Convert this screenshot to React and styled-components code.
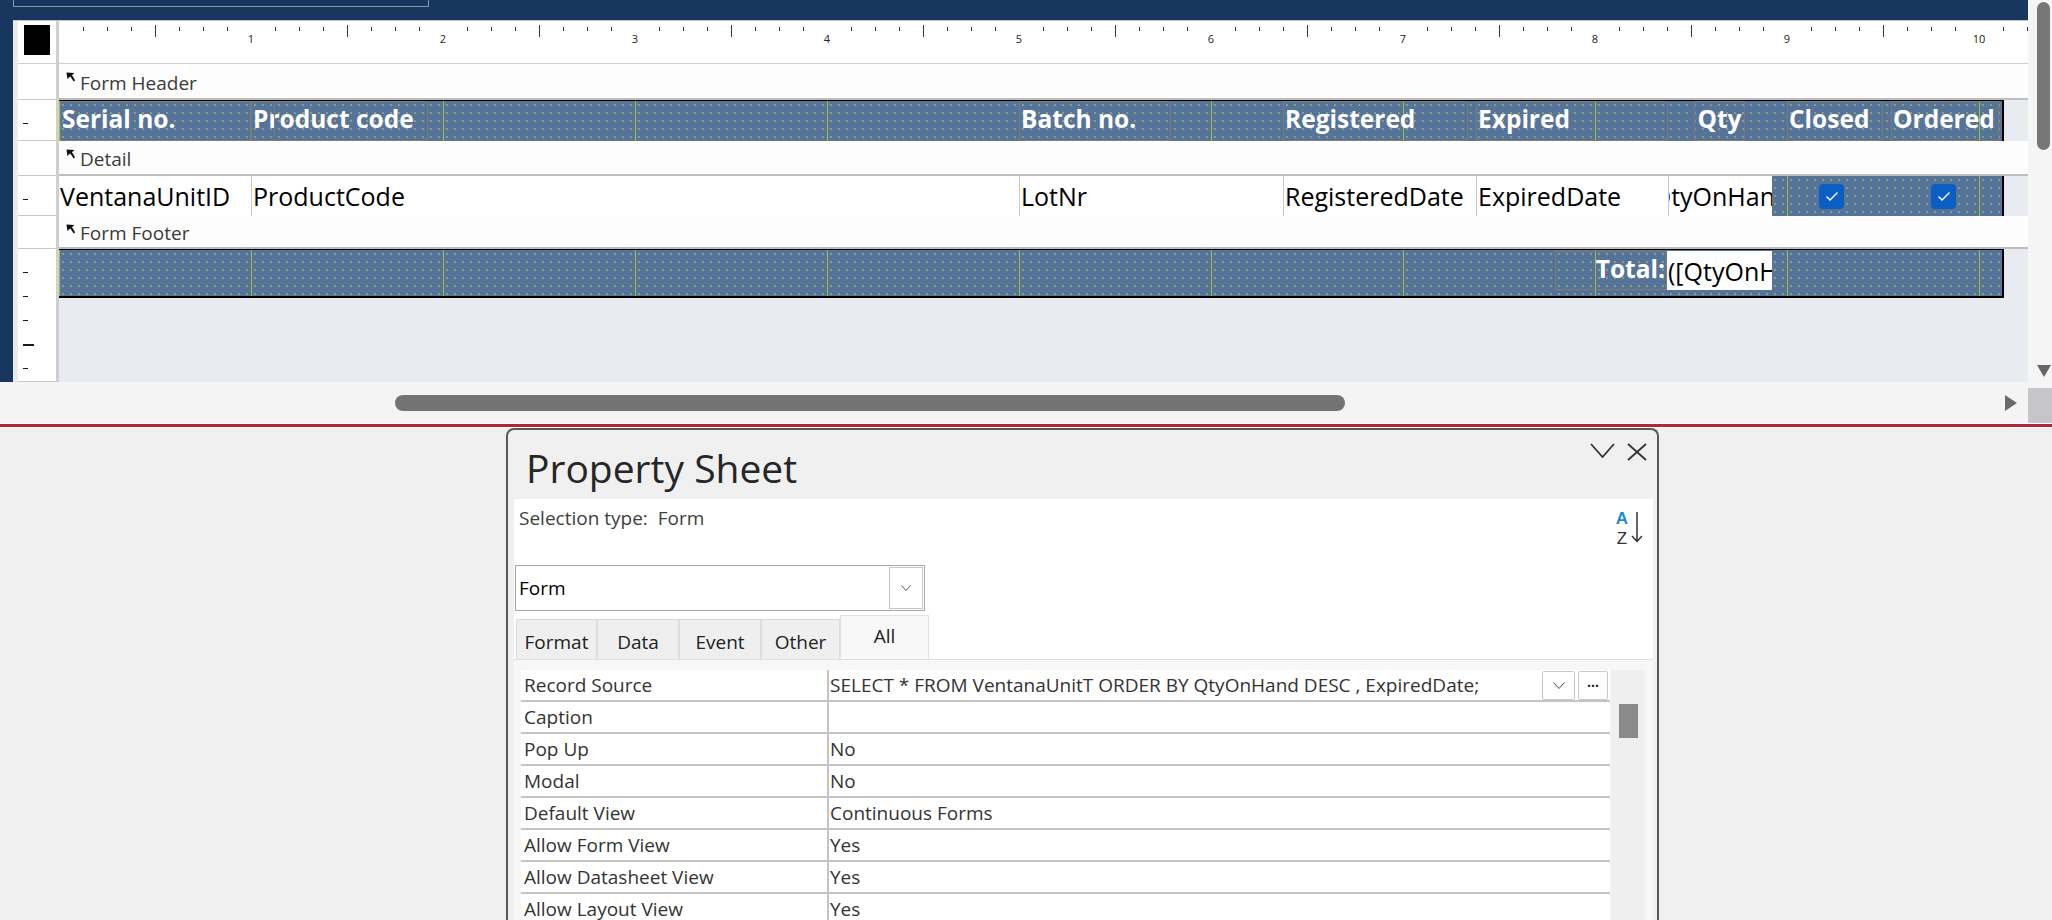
import React from "react";
import styled, { createGlobalStyle } from "styled-components";

const GlobalStyle = createGlobalStyle`
  html, body {
    margin: 0;
    padding: 0;
    background: #f0f0f0;
  }
  body {
    width: 2052px;
    height: 920px;
    overflow: hidden;
    font-family: "Open Sans", "Noto Sans", sans-serif;
  }
  * {
    box-sizing: border-box;
  }
`;

const Page = styled.div`
  width: 2052px;
  height: 920px;
  display: flex;
  flex-direction: column;
  overflow: hidden;
`;

/* ---------- design view ---------- */

const Design = styled.div`
  display: grid;
  grid-template-columns: 1fr 24px;
  height: 382px;
  flex-shrink: 0;
`;

const DesignMain = styled.div`
  display: flex;
  flex-direction: column;
  background: #17375e;
  min-width: 0;
`;

const TitleStrip = styled.div`
  height: 20px;
  flex-shrink: 0;
  padding-left: 13px;
`;

const TabOutline = styled.div`
  width: 416px;
  height: 7px;
  border: 1px solid #8896a8;
  border-top: none;
`;

const WindowWrap = styled.div`
  flex: 1;
  display: flex;
  padding-left: 13px;
  min-height: 0;
`;

const Window = styled.div`
  flex: 1;
  display: flex;
  flex-direction: column;
  background: #ebebeb;
  border-top: 1px solid #c4c4c4;
  padding-left: 5px;
  overflow: hidden;
`;

const RulerRow = styled.div`
  display: grid;
  grid-template-columns: 38px 1fr;
  column-gap: 3px;
  height: 43px;
  padding-bottom: 1px;
  background: #cfcfcf;
  flex-shrink: 0;
`;

const Corner = styled.div`
  background: #fff;
  padding: 4px 0 0 6px;
`;

const CornerSquare = styled.div`
  width: 26px;
  height: 30px;
  background: #000;
`;

const HRuler = styled.div`
  display: flex;
  background: #fff;
  overflow: hidden;
`;

const InchCell = styled.div`
  display: grid;
  grid-template-columns: 192px;
  width: 192px;
  flex-shrink: 0;
  & > * {
    grid-area: 1 / 1;
  }
`;

const RulerNum = styled.span`
  justify-self: end;
  transform: translateX(50%);
  margin-top: 12px;
  font-size: 11px;
  line-height: 12px;
  color: #222;
`;

const SectionRow = styled.div`
  display: grid;
  grid-template-columns: 38px 1fr;
  column-gap: 3px;
  height: ${(p) => p.$h}px;
  background: #cfcfcf;
  flex-shrink: 0;
`;

const VRuler = styled.div`
  background-color: #fff;
  border-bottom: 1px solid #c8c8c8;
  ${(p) =>
    p.$ticks &&
    `
    background-image:
      repeating-linear-gradient(to bottom, transparent 0 95px, #1a1a1a 95px 97px),
      repeating-linear-gradient(to bottom, transparent 0 23px, #1a1a1a 23px 24px);
    background-size: 11px 100%, 5px 100%;
    background-position: 5px 0, 5px 0;
    background-repeat: no-repeat;
  `}
`;

const Bar = styled.div`
  display: flex;
  align-items: center;
  gap: 4px;
  padding: 3px 0 0 7px;
  background: #fdfdfd;
  border-bottom: 2px solid #bdbdbd;
  font-size: 19px;
  color: #3a3a3a;
`;

const BarArrow = styled.svg`
  align-self: flex-start;
  margin-top: 5px;
  flex-shrink: 0;
`;

const Lane = styled.div`
  display: flex;
  flex-direction: ${(p) => (p.$column ? "column" : "row")};
  background: #e8ebef;
  min-width: 0;
`;

const Band = styled.div`
  position: relative;
  width: 1945px;
  height: ${(p) => (p.$h ? `${p.$h}px` : "100%")};
  flex-shrink: 0;
  background-color: #56739a;
  background-image: linear-gradient(90deg, #a3c23a 1px, transparent 1px),
    radial-gradient(circle at 4px 4px, rgba(186, 212, 78, 0.65) 0.6px, transparent 1px);
  background-size: 192px 100%, 8px 8px;
  border-right: 2px solid #000;
  border-top: ${(p) => (p.$top ? "1px solid #000" : "none")};
  border-bottom: ${(p) => (p.$bottom ? "2px solid #000" : "none")};
`;

/* controls on the form design canvas */
const Placed = styled.div`
  position: absolute;
  left: ${(p) => p.$x}px;
  width: ${(p) => p.$w}px;
  top: ${(p) => p.$y || 0}px;
  height: ${(p) => (p.$h ? `${p.$h}px` : "100%")};
  display: flex;
  align-items: center;
  overflow: hidden;
  white-space: nowrap;
`;

const HeadLabel = styled(Placed)`
  border: 1px solid #7b7b7b;
  color: #fff;
  font-weight: 700;
  font-size: 24.5px;
  padding: 0 1px 5px;
  justify-content: ${(p) =>
    p.$align === "center" ? "center" : p.$align === "right" ? "flex-end" : "flex-start"};
`;

const Field = styled(Placed)`
  background: #fff;
  color: #000;
  font-size: 25px;
  padding-left: 1px;
  border-left: ${(p) => (p.$sep ? "1px solid #c9c9c9" : "none")};
  justify-content: ${(p) => (p.$center ? "center" : "flex-start")};
`;

const Check = styled(Placed)`
  border-radius: 4px;
  background: #0b5fc2;
  justify-content: center;
`;

const VScroll = styled.div`
  display: flex;
  flex-direction: column;
  justify-content: space-between;
  background: #f5f5f5;
  padding: 2px 2px 5px 9px;
`;

const VThumb = styled.div`
  width: 13px;
  height: 148px;
  border-radius: 7px;
  background: #777;
`;

const DownArrow = styled.div`
  width: 0;
  height: 0;
  border-left: 7px solid transparent;
  border-right: 7px solid transparent;
  border-top: 12px solid #666;
`;

const HScroll = styled.div`
  display: flex;
  align-items: center;
  height: 41px;
  flex-shrink: 0;
  background: #f4f4f4;
`;

const HThumb = styled.div`
  margin-left: 395px;
  width: 950px;
  height: 16px;
  border-radius: 8px;
  background: #737373;
`;

const RightArrow = styled.div`
  margin-left: auto;
  margin-right: 11px;
  width: 0;
  height: 0;
  border-top: 8px solid transparent;
  border-bottom: 8px solid transparent;
  border-left: 12px solid #6a6a6a;
`;

const ScrollCorner = styled.div`
  width: 24px;
  align-self: stretch;
  margin-top: 6px;
  background: #c6c6ca;
`;

const Divider = styled.div`
  height: 5px;
  flex-shrink: 0;
  background: #b0263b;
  border-top: 1px solid #fff;
  border-bottom: 1px solid #fff;
`;

/* ---------- property sheet ---------- */

const Lower = styled.div`
  flex: 1;
  min-height: 0;
  padding-left: 506px;
  background: #f0f0f0;
`;

const Panel = styled.div`
  width: 1153px;
  height: 100%;
  display: flex;
  flex-direction: column;
  background: #f0f0f0;
  border: 2px solid #595959;
  border-bottom: none;
  border-radius: 8px 8px 0 0;
  overflow: hidden;
`;

const PanelHead = styled.div`
  height: 69px;
  flex-shrink: 0;
  display: flex;
  justify-content: space-between;
  align-items: flex-start;
  padding: 11px 10px 0 18px;
`;

const PanelTitle = styled.div`
  font-size: 39px;
  line-height: 53px;
  color: #262626;
`;

const HeadIcons = styled.div`
  display: flex;
  align-items: flex-start;
  gap: 12px;
  margin-top: 2px;
`;

const Content = styled.div`
  flex: 1;
  display: flex;
  flex-direction: column;
  margin: 0 4px 0 6px;
  background: #fff;
  min-height: 0;
`;

const SelRow = styled.div`
  height: 62px;
  flex-shrink: 0;
  display: flex;
  justify-content: space-between;
  padding: 6px 10px 0 5px;
`;

const SelText = styled.div`
  font-size: 19px;
  line-height: 26px;
  color: #404040;
  white-space: pre;
`;

const SortIcon = styled.div`
  display: flex;
  align-items: flex-start;
  gap: 3px;
  margin-top: 4px;
`;

const Letters = styled.div`
  display: flex;
  flex-direction: column;
  align-items: center;
  font-family: "Liberation Sans", Arial, sans-serif;
`;

const Letter = styled.span`
  font-size: 17px;
  line-height: 1.15;
  font-weight: ${(p) => (p.$blue ? 700 : 400)};
  color: ${(p) => (p.$blue ? "#1d8ad6" : "#333")};
`;

const Combo = styled.div`
  width: 410px;
  height: 46px;
  flex-shrink: 0;
  margin: 4px 0 0 1px;
  display: flex;
  align-items: center;
  border: 1px solid #a6a6a6;
  background: #fff;
  padding-left: 3px;
  font-size: 19px;
  color: #000;
`;

const ComboButton = styled.div`
  margin-left: auto;
  margin-right: 1px;
  width: 34px;
  height: 42px;
  display: flex;
  align-items: center;
  justify-content: center;
  border: 1px solid #c8c8c8;
`;

const Tabs = styled.div`
  display: flex;
  align-items: flex-end;
  height: 44px;
  margin-top: 4px;
  padding-left: 2px;
  flex-shrink: 0;
`;

const Tab = styled.div`
  width: ${(p) => p.$w}px;
  height: ${(p) => (p.$active ? 44 : 40)}px;
  display: flex;
  justify-content: center;
  align-items: ${(p) => (p.$active ? "flex-start" : "center")};
  padding-top: ${(p) => (p.$active ? 7 : 5)}px;
  font-size: 19px;
  color: #222;
  background: ${(p) => (p.$active ? "#f8f8f8" : "#efefef")};
  border: 1px solid ${(p) => (p.$active ? "#e2e2e2" : "#dcdcdc")};
  border-bottom: none;
`;

const GridArea = styled.div`
  flex: 1;
  min-height: 0;
  display: flex;
  padding: 10px 8px 0 7px;
  background: #f7f7f7;
  border-top: 1px solid #dfdfdf;
`;

const PropTable = styled.div`
  flex: 1;
  background: #fff;
`;

const PropRow = styled.div`
  display: grid;
  grid-template-columns: 308px 1fr;
  height: 32px;
  border-bottom: 2px solid #c4c4c4;
  font-size: 19px;
  color: #333;
`;

const PropLabel = styled.div`
  display: flex;
  align-items: center;
  padding-left: 3px;
  border-right: 2px solid #c4c4c4;
  white-space: nowrap;
`;

const PropValue = styled.div`
  display: flex;
  align-items: center;
  padding-left: 1px;
  white-space: nowrap;
  overflow: hidden;
`;

const RowButtons = styled.div`
  display: flex;
  gap: 3px;
  margin-left: auto;
  margin-right: 2px;
  align-self: flex-start;
  margin-top: 1px;
`;

const SmallButton = styled.div`
  width: ${(p) => p.$w}px;
  height: 29px;
  display: flex;
  align-items: center;
  justify-content: center;
  border: 1px solid #c8c8c8;
  border-radius: 2px;
  background: #fff;
  font-size: 14px;
  font-weight: 700;
  line-height: 1;
  color: #222;
`;

const GridScroll = styled.div`
  width: 34px;
  margin-left: 1px;
  background: #efefef;
  padding: 34px 0 0 8px;
`;

const GridThumb = styled.div`
  width: 19px;
  height: 34px;
  background: #8a8a8a;
`;

/* ---------- data ---------- */

const headerLabels = [
  { x: 1, w: 191, text: "Serial no." },
  { x: 192, w: 177, text: "Product code" },
  { x: 192, w: 24, text: "" },
  { x: 960, w: 152, text: "Batch no." },
  { x: 1224, w: 185, text: "Registered" },
  { x: 1417, w: 192, text: "Expired" },
  { x: 1635, w: 51, text: "Qty", align: "center" },
  { x: 1728, w: 96, text: "Closed" },
  { x: 1832, w: 108, text: "Ordered" },
];

const detailFields = [
  { x: 0, w: 192, text: "VentanaUnitID" },
  { x: 192, w: 768, text: "ProductCode", sep: true },
  { x: 960, w: 264, text: "LotNr", sep: true },
  { x: 1224, w: 193, text: "RegisteredDate", sep: true },
  { x: 1417, w: 192, text: "ExpiredDate", sep: true },
  { x: 1609, w: 104, text: "QtyOnHand", sep: true, center: true },
];

const properties = [
  ["Record Source", "SELECT * FROM VentanaUnitT ORDER BY QtyOnHand DESC , ExpiredDate;"],
  ["Caption", ""],
  ["Pop Up", "No"],
  ["Modal", "No"],
  ["Default View", "Continuous Forms"],
  ["Allow Form View", "Yes"],
  ["Allow Datasheet View", "Yes"],
  ["Allow Layout View", "Yes"],
];

const tabs = [
  ["Format", 81],
  ["Data", 82],
  ["Event", 82],
  ["Other", 79],
  ["All", 89, true],
];

/* ---------- small drawings ---------- */

function Ticks() {
  const xs = [24, 48, 72, 96, 120, 144, 168];
  return (
    <svg width="192" height="20">
      {xs.map((x) => (
        <line
          key={x}
          x1={x + 0.5}
          x2={x + 0.5}
          y1={x === 96 ? 4 : 6}
          y2={x === 96 ? 16 : 10}
          stroke="#333"
          strokeWidth="1"
        />
      ))}
    </svg>
  );
}

function SectionBar({ title }) {
  return (
    <Bar>
      <BarArrow width="10" height="10" viewBox="0 0 10 10">
        <path d="M0.5 0.5 L8.5 1 L5.8 3.2 C7 4.6 8.4 6.4 9 8.6 L7.4 9.4 C6.6 7.6 5.2 5.8 4 4.6 L1.4 7 Z" fill="#111" />
      </BarArrow>
      <span>{title}</span>
    </Bar>
  );
}

function CheckMark() {
  return (
    <svg width="14" height="11" viewBox="0 0 14 11">
      <polyline points="1.5,5.5 5,9 12.5,1.5" fill="none" stroke="#fff" strokeWidth="1.4" />
    </svg>
  );
}

function Chevron({ w = 10, h = 6, color = "#555", sw = 1 }) {
  return (
    <svg width={w} height={h} viewBox={`0 0 ${w} ${h}`}>
      <polyline
        points={`0.5,0.5 ${w / 2},${h - 0.5} ${w - 0.5},0.5`}
        fill="none"
        stroke={color}
        strokeWidth={sw}
      />
    </svg>
  );
}

export default function App() {
  return (
    <>
      <GlobalStyle />
      <Page>
        <Design>
          <DesignMain>
            <TitleStrip>
              <TabOutline />
            </TitleStrip>
            <WindowWrap>
              <Window>
                <RulerRow>
                  <Corner>
                    <CornerSquare />
                  </Corner>
                  <HRuler>
                    {Array.from({ length: 11 }, (_, i) => (
                      <InchCell key={i}>
                        <Ticks />
                        {i < 10 && <RulerNum>{i + 1}</RulerNum>}
                      </InchCell>
                    ))}
                  </HRuler>
                </RulerRow>

                <SectionRow $h={36}>
                  <VRuler />
                  <SectionBar title="Form Header" />
                </SectionRow>
                <SectionRow $h={41}>
                  <VRuler $ticks />
                  <Lane>
                    <Band $top>
                      {headerLabels.map((l, i) => (
                        <HeadLabel key={i} $x={l.x} $w={l.w} $align={l.align}>
                          {l.text}
                        </HeadLabel>
                      ))}
                    </Band>
                  </Lane>
                </SectionRow>

                <SectionRow $h={35}>
                  <VRuler />
                  <SectionBar title="Detail" />
                </SectionRow>
                <SectionRow $h={40}>
                  <VRuler $ticks />
                  <Lane>
                    <Band>
                      {detailFields.map((f) => (
                        <Field key={f.text} $x={f.x} $w={f.w} $sep={f.sep} $center={f.center}>
                          {f.text}
                        </Field>
                      ))}
                      <Check $x={1760} $w={25} $y={8} $h={25}>
                        <CheckMark />
                      </Check>
                      <Check $x={1872} $w={25} $y={8} $h={25}>
                        <CheckMark />
                      </Check>
                    </Band>
                  </Lane>
                </SectionRow>

                <SectionRow $h={33}>
                  <VRuler />
                  <SectionBar title="Form Footer" />
                </SectionRow>
                <SectionRow $h={133}>
                  <VRuler $ticks />
                  <Lane $column>
                    <Band $h={49} $top $bottom>
                      <HeadLabel $x={1496} $w={112} $y={1} $h={39} $align="right">
                        Total:
                      </HeadLabel>
                      <Field $x={1608} $w={105} $y={1} $h={39}>
                        ([QtyOnHand])
                      </Field>
                    </Band>
                  </Lane>
                </SectionRow>
              </Window>
            </WindowWrap>
          </DesignMain>
          <VScroll>
            <VThumb />
            <DownArrow />
          </VScroll>
        </Design>

        <HScroll>
          <HThumb />
          <RightArrow />
          <ScrollCorner />
        </HScroll>
        <Divider />

        <Lower>
          <Panel>
            <PanelHead>
              <PanelTitle>Property Sheet</PanelTitle>
              <HeadIcons>
                <svg width="25" height="15" viewBox="0 0 25 15">
                  <polyline points="1,1 12.5,14 24,1" fill="none" stroke="#333" strokeWidth="1.8" />
                </svg>
                <svg width="20" height="18" viewBox="0 0 20 18">
                  <path d="M1 1 L19 17 M19 1 L1 17" stroke="#333" strokeWidth="1.8" fill="none" />
                </svg>
              </HeadIcons>
            </PanelHead>

            <Content>
              <SelRow>
                <SelText>{"Selection type:  Form"}</SelText>
                <SortIcon>
                  <Letters>
                    <Letter $blue>A</Letter>
                    <Letter>Z</Letter>
                  </Letters>
                  <svg width="12" height="34" viewBox="0 0 12 34">
                    <path d="M6 3 V32.5 M1 27 L6 32.5 L11 27" fill="none" stroke="#333" strokeWidth="1.5" />
                  </svg>
                </SortIcon>
              </SelRow>

              <Combo>
                Form
                <ComboButton>
                  <Chevron />
                </ComboButton>
              </Combo>

              <Tabs>
                {tabs.map(([t, w, active]) => (
                  <Tab key={t} $w={w} $active={active}>
                    {t}
                  </Tab>
                ))}
              </Tabs>

              <GridArea>
                <PropTable>
                  {properties.map(([label, value], i) => (
                    <PropRow key={label}>
                      <PropLabel>{label}</PropLabel>
                      <PropValue>
                        {value}
                        {i === 0 && (
                          <RowButtons>
                            <SmallButton $w={33}>
                              <Chevron w={12} h={7} color="#444" />
                            </SmallButton>
                            <SmallButton $w={30}>···</SmallButton>
                          </RowButtons>
                        )}
                      </PropValue>
                    </PropRow>
                  ))}
                </PropTable>
                <GridScroll>
                  <GridThumb />
                </GridScroll>
              </GridArea>
            </Content>
          </Panel>
        </Lower>
      </Page>
    </>
  );
}
